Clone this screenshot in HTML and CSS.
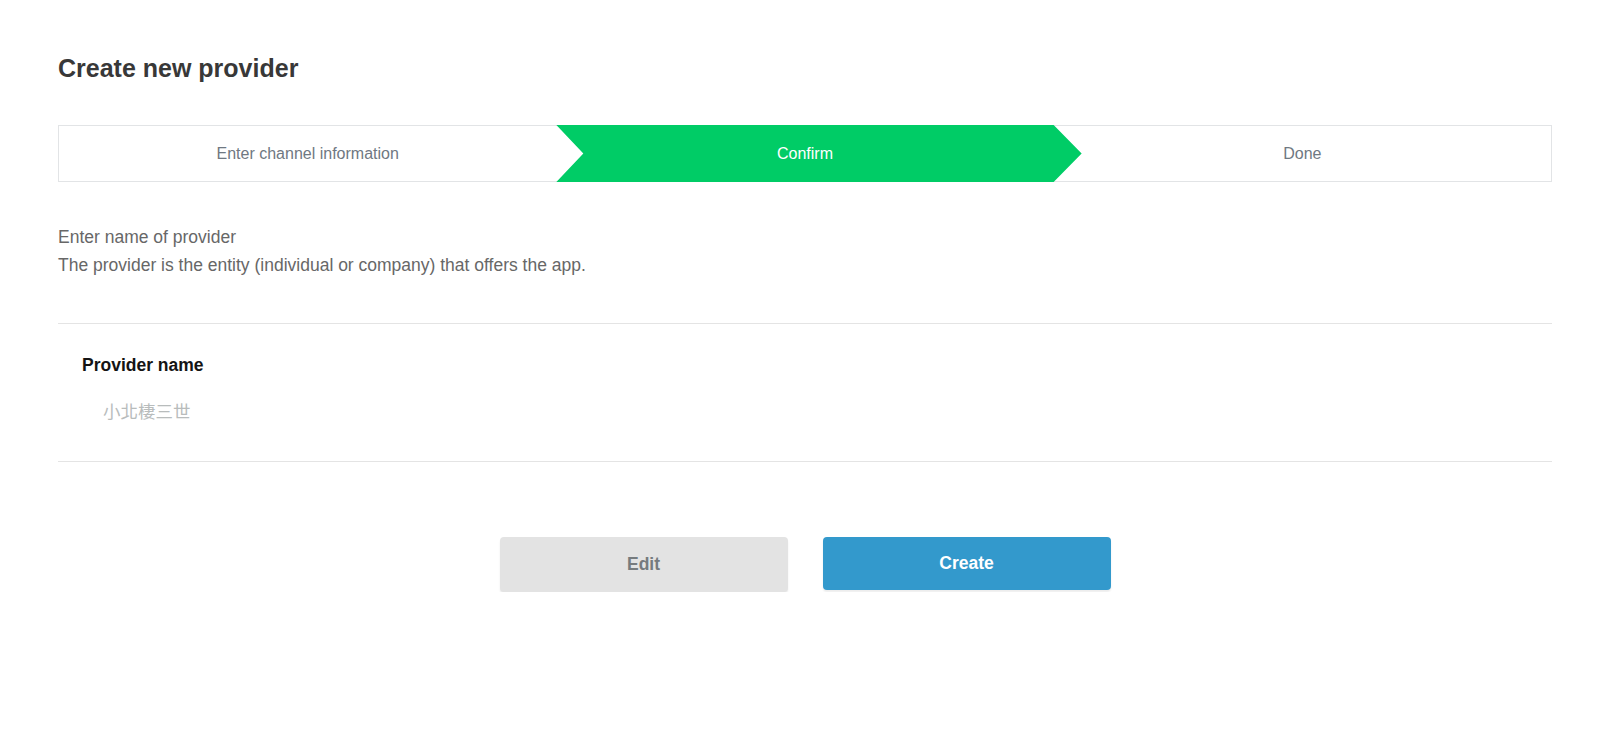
FILE: index.html
```html
<!DOCTYPE html>
<html lang="en">
<head>
<meta charset="utf-8">
<title>Create new provider</title>
<link rel="stylesheet" href="styles.css">
</head>
<body>
<main class="page">
  <h1 class="title">Create new provider</h1>
  <ol class="stepper">
    <li class="step">Enter channel information</li>
    <li class="step step-active"><span class="step-label">Confirm</span></li>
    <li class="step">Done</li>
  </ol>
  <div class="desc">
    <p>Enter name of provider</p>
    <p>The provider is the entity (individual or company) that offers the app.</p>
  </div>
  <section class="field">
    <div class="field-label">Provider name</div>
    <div class="field-value">小北棲三世</div>
  </section>
  <div class="actions">
    <button class="btn btn-edit" type="button">Edit</button>
    <button class="btn btn-create" type="button">Create</button>
  </div>
</main>
</body>
</html>
```
FILE: styles.css
```css
* { box-sizing: border-box; }
html, body { margin: 0; padding: 0; background: #fff; }
body {
  font-family: "Liberation Sans", Arial, "Noto Sans CJK SC", sans-serif;
  color: #333;
}
.page {
  width: 1494px;
  margin-left: 58px;
  padding-top: 53px;
}
.title {
  margin: 0;
  font-size: 25px;
  line-height: 30px;
  font-weight: bold;
  color: #383838;
}
.stepper {
  list-style: none;
  margin: 42px 0 0;
  padding: 0;
  display: flex;
  height: 57px;
  border: 1px solid #e2e4e6;
}
.step {
  flex: 1 1 0;
  display: flex;
  align-items: center;
  justify-content: center;
  font-size: 16px;
  color: #6f7882;
  position: relative;
}
.step-active::before {
  content: "";
  position: absolute;
  left: 0;
  top: -1px;
  bottom: -1px;
  right: -28px;
  background: #00cc66;
  clip-path: polygon(0 0, calc(100% - 28px) 0, 100% 50%, calc(100% - 28px) 100%, 0 100%, 27px 50%);
}
.step-label {
  position: relative;
  color: #fff;
}
.desc {
  margin-top: 41px;
  font-size: 17.5px;
  line-height: 28px;
  color: #676767;
}
.desc p { margin: 0; }
.field {
  margin-top: 44px;
  border-top: 1px solid #e4e4e4;
  border-bottom: 1px solid #e4e4e4;
  padding: 29px 24px 37px;
}
.field-label {
  font-size: 17.5px;
  line-height: 24px;
  font-weight: bold;
  color: #141414;
}
.field-value {
  margin-top: 23px;
  padding-left: 21px;
  font-size: 17.5px;
  line-height: 24px;
  color: #b8bcbc;
  font-family: "Liberation Sans", "Noto Sans CJK TC", "Noto Sans CJK SC", sans-serif;
}
.actions {
  margin-top: 75px;
  display: flex;
  justify-content: center;
  gap: 35px;
}
.btn {
  width: 288px;
  height: 55px;
  border: 0;
  border-radius: 4px;
  font-family: "Liberation Sans", Arial, sans-serif;
  font-size: 17.5px;
  font-weight: bold;
  box-shadow: 0 2px 2px rgba(0, 0, 0, 0.08);
  cursor: pointer;
}
.btn-edit {
  background: #e3e3e3;
  color: #767b7e;
}
.btn-create {
  background: #3399cc;
  color: #fff;
  height: 53px;
}
```
